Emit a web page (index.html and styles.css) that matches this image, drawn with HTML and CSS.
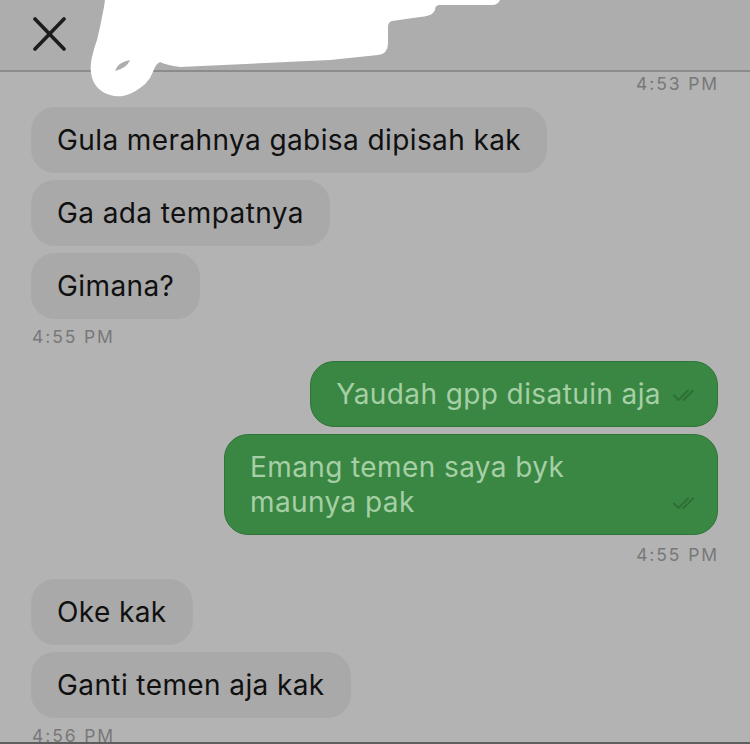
FILE: index.html
```html
<!DOCTYPE html>
<html lang="id">
<head>
<meta charset="utf-8">
<title>Chat</title>
<link rel="stylesheet" href="styles.css">
</head>
<body>
<div class="screen">
  <header class="topbar">
    <svg class="close" width="34" height="34" viewBox="0 0 34 34" aria-label="Tutup">
      <path d="M3 2 L32 32 M32 2 L3 32" stroke="#1c1c1c" stroke-width="3.6" stroke-linecap="round" fill="none"/>
    </svg>
  </header>

  <main class="thread">
    <div class="time right first">4:53 PM</div>
    <div class="group in">
      <div class="bubble">Gula merahnya gabisa dipisah kak</div>
      <div class="bubble">Ga ada tempatnya</div>
      <div class="bubble">Gimana?</div>
    </div>
    <div class="time">4:55 PM</div>
    <div class="group out">
      <div class="bubble"><span class="text">Yaudah gpp disatuin aja</span><svg class="ticks" width="24" height="16" viewBox="0 0 24 16"><path d="M1 8.5 L5.5 13 L15 3.5 M10.5 13 L20 3.5" stroke="#2c6b34" stroke-width="2" fill="none" stroke-linecap="round" stroke-linejoin="round"/></svg></div>
      <div class="bubble"><span class="text">Emang temen saya byk maunya pak</span><svg class="ticks" width="24" height="16" viewBox="0 0 24 16"><path d="M1 8.5 L5.5 13 L15 3.5 M10.5 13 L20 3.5" stroke="#2c6b34" stroke-width="2" fill="none" stroke-linecap="round" stroke-linejoin="round"/></svg></div>
    </div>
    <div class="time right">4:55 PM</div>
    <div class="group in">
      <div class="bubble">Oke kak</div>
      <div class="bubble">Ganti temen aja kak</div>
    </div>
    <div class="time">4:56 PM</div>
  </main>

  <span class="title-peek"><span>at</span></span>
  <svg class="scribble" width="520" height="110" viewBox="0 0 520 110" aria-hidden="true">
    <path d="M105 0 L500 0 Q498 5 492 5 L440 5 Q435 5 435 10 L433 13 Q430 16 420 17 L392 21 Q388 22 388 27 L388 43 Q388 54 378 55 L330 60 L180 67 Q166 65 160 62 Q156 64 155 67 Q153 72 150 78 Q146 84 140 88 Q132 94 123 96 Q116 97 110 95 Q101 92 97 87 Q92 81 91 73 Q90 65 92 57 Q94 48 97 40 Q100 28 102 17 Q104 8 105 0 Z" fill="#ffffff"/>
    <path d="M115 71 Q118 62 130 60 Q127 68 115 71 Z" fill="#adadad"/>
  </svg>
</div>
</body>
</html>
```

FILE: styles.css
```css
html, body {
  margin: 0;
  padding: 0;
}

body {
  background: #b3b3b3;
  font-family: Inter, "Liberation Sans", Arial, sans-serif;
}

.screen {
  position: relative;
  width: 750px;
  height: 744px;
  overflow: hidden;
  background: #b3b3b3;
}

.screen::after {
  content: "";
  position: absolute;
  left: 0;
  right: 0;
  bottom: 0;
  height: 2px;
  background: #5e5e5e;
}

.topbar {
  height: 70px;
  background: #adadad;
  border-bottom: 2px solid #8c8c8c;
  display: flex;
  align-items: center;
  padding-left: 32px;
}

.close {
  display: block;
  margin-top: -2px;
}

.thread {
  display: flex;
  flex-direction: column;
  padding: 0 32px 0 31px;
}

.time {
  height: 20px;
  line-height: 20px;
  font-size: 17.5px;
  letter-spacing: 1.9px;
  color: #787878;
  margin: 8px 0 14px 1px;
}

.time.right {
  text-align: right;
  margin-right: -1px;
  margin-top: 10px;
}

.time.first {
  margin-top: 2px;
  margin-bottom: 13px;
}

.group {
  display: flex;
  flex-direction: column;
  gap: 7px;
  align-items: flex-start;
}

.group.out {
  align-items: flex-end;
}

.bubble {
  box-sizing: border-box;
  border-radius: 24px;
  font-size: 28px;
  letter-spacing: 0.4px;
  line-height: 35px;
  padding: 15.5px 26px;
}

.in .bubble {
  background: #a9a9a9;
  color: #101010;
}

.out .bubble {
  display: flex;
  gap: 12px;
  max-width: 494px;
  background: #3a8744;
  color: #a6cfa5;
  border: 1px solid #2f7538;
  padding: 14.5px 20px 14.5px 25px;
}

.ticks {
  flex: none;
  align-self: flex-end;
  margin-bottom: 9px;
  opacity: 0.85;
}

.scribble {
  position: absolute;
  left: 0;
  top: 0;
}

.title-peek {
  position: absolute;
  left: 357px;
  top: 22px;
  width: 31px;
  height: 8px;
  overflow: hidden;
  font-size: 24px;
  font-weight: 700;
  color: #111;
}

.title-peek span {
  display: block;
  margin-top: -16px;
  line-height: 24px;
  padding-left: 4px;
}
```
